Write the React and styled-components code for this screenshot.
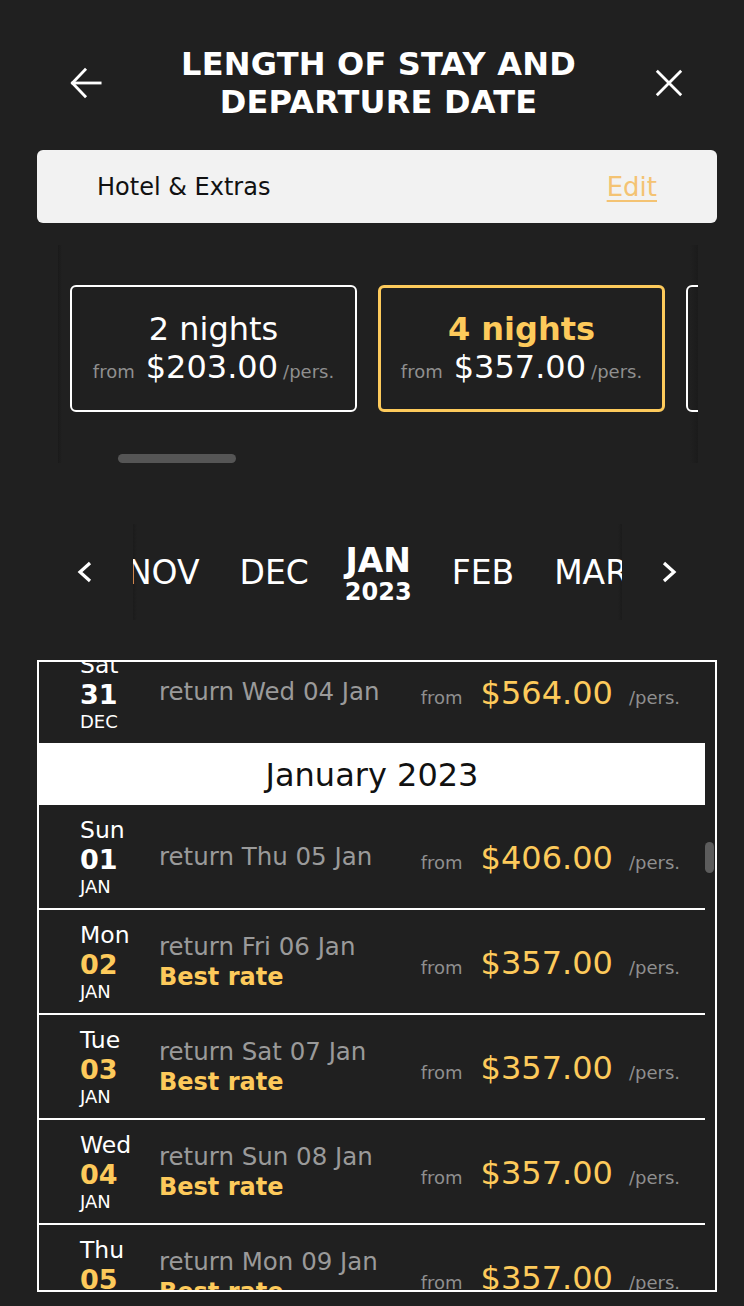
import React, { useEffect, useRef } from 'react';
import styled, { createGlobalStyle } from 'styled-components';

const GlobalStyle = createGlobalStyle`
    html, body {
        margin: 0;
        padding: 0;
        background: #202020;
        font-family: "DejaVu Sans", "Liberation Sans", sans-serif;
        color: #fff;
    }
    * { box-sizing: border-box; }
`;

const YELLOW = '#fdca5b';

const Page = styled.div`
    width: 744px;
    min-height: 1306px;
    padding-bottom: 14px;
    overflow: hidden;
`;

const Header = styled.header`
    display: grid;
    grid-template-columns: 32px 1fr 28px;
    align-items: center;
    padding: 45px 61px 0 70px;
`;

const Title = styled.h1`
    margin: 0;
    font-size: 32px;
    line-height: 38px;
    font-weight: 700;
    text-align: center;
    letter-spacing: 0.2px;
`;

const IconButton = styled.button`
    background: none;
    border: 0;
    padding: 0;
    display: flex;
    align-items: center;
    justify-content: center;
    color: #fff;
`;

const Summary = styled.div`
    margin: 29px 27px 0 37px;
    height: 73px;
    background: #f2f2f2;
    border-radius: 6px;
    display: flex;
    align-items: center;
    justify-content: space-between;
    padding: 0 60px;
    font-size: 24px;
    color: #111;
`;

const EditLink = styled.a`
    font-size: 26px;
    color: #f4c373;
    text-decoration: underline;
    text-underline-offset: 4px;
`;

const StayCarousel = styled.div`
    margin: 22px 0 0 58px;
    width: 640px;
    height: 218px;
    padding-top: 40px;
    overflow: hidden;
    background: linear-gradient(to right, #1a1a1a 0, #202020 4px, #202020 632px, #1b1b1b 640px);
`;

const CardRow = styled.div`
    display: flex;
    gap: 21px;
    padding-left: 12px;
`;

const StayCard = styled.div`
    flex: 0 0 287px;
    height: 127px;
    border-radius: 6px;
    border: ${p => (p.$active ? `3px solid ${YELLOW}` : '2px solid #fff')};
    display: flex;
    flex-direction: column;
    align-items: center;
    justify-content: center;
    padding-bottom: 2px;
`;

const Nights = styled.div`
    font-size: 32px;
    line-height: 38px;
    font-weight: ${p => (p.$active ? 700 : 400)};
    color: ${p => (p.$active ? YELLOW : '#fff')};
`;

const PriceLine = styled.div`
    display: flex;
    align-items: baseline;
`;

const Small = styled.span`
    font-size: 18px;
    color: #8f8f8f;
`;

const CardPrice = styled.span`
    font-size: 32px;
    color: #fff;
    margin: 0 5px 0 11px;
`;

const ThumbTrack = styled.div`
    margin: 42px 0 0 60px;
    width: 118px;
    height: 9px;
    border-radius: 5px;
    background: #555;
`;

const MonthNav = styled.nav`
    margin-top: 61px;
    display: flex;
    align-items: center;
    padding-left: 70px;
`;

const Chevron = styled.button`
    width: 30px;
    height: 40px;
    background: none;
    border: 0;
    padding: 0;
    display: flex;
    align-items: center;
    justify-content: center;
`;

const MonthStrip = styled.div`
    width: 489px;
    height: 96px;
    margin: 0 32px 0 33px;
    overflow: hidden;
    display: flex;
    align-items: center;
    justify-content: center;
    gap: 40px;
    background: linear-gradient(to right, #1b1b1b 0, #202020 4px, #202020 485px, #1b1b1b 489px);
`;

const Month = styled.div`
    flex: 0 0 auto;
    display: flex;
    flex-direction: column;
    align-items: center;
    font-size: 33px;
    line-height: 36px;
    font-weight: ${p => (p.$current ? 700 : 400)};
    padding-top: ${p => (p.$current ? '4px' : '2px')};
    margin-left: ${p => (p.$current ? '-4px' : '0')};
`;

const Year = styled.span`
    font-size: 24px;
    line-height: 26px;
    font-weight: 700;
`;

const ListBox = styled.div`
    position: relative;
    margin: 40px 27px 0 37px;
    height: 632px;
    border: 2px solid #fff;
`;

const ListScroll = styled.div`
    height: 100%;
    overflow: hidden;
    padding-right: 10px;
`;

const ScrollThumb = styled.div`
    position: absolute;
    top: 180px;
    right: 1px;
    width: 9px;
    height: 31px;
    border-radius: 5px;
    background: #5c5c5c;
`;

const MonthHeader = styled.div`
    height: 60px;
    background: #fff;
    color: #111;
    font-size: 32px;
    display: flex;
    align-items: center;
    justify-content: center;
`;

const DayRow = styled.div`
    height: 105px;
    border-bottom: 2px solid #fff;
    display: flex;
    align-items: center;
    padding: 0 25px 0 41px;
`;

const DayCol = styled.div`
    width: 79px;
    display: flex;
    flex-direction: column;
    padding-top: 1px;
`;

const WeekDay = styled.span`
    font-size: 23.5px;
    line-height: 28px;
`;

const DayNum = styled.span`
    font-size: 27px;
    line-height: 31px;
    font-weight: 700;
    color: ${p => (p.$best ? YELLOW : '#fff')};
`;

const MonthAbbr = styled.span`
    font-size: 18px;
    line-height: 24px;
`;

const ReturnCol = styled.div`
    flex: 1;
    display: flex;
    flex-direction: column;
    font-size: 24.5px;
    line-height: 30px;
    color: #9a9a9a;
`;

const BestRate = styled.span`
    color: ${YELLOW};
    font-weight: 700;
    font-size: 24px;
`;

const RowPrice = styled.div`
    display: flex;
    align-items: baseline;
    padding-top: 2px;
`;

const Price = styled.span`
    font-size: 32px;
    color: ${YELLOW};
    margin: 0 16px 0 18px;
`;

const days = [
    { wd: 'Sat', d: '31', m: 'DEC', ret: 'Wed 04 Jan', price: '$564.00' },
    { header: 'January 2023' },
    { wd: 'Sun', d: '01', m: 'JAN', ret: 'Thu 05 Jan', price: '$406.00' },
    { wd: 'Mon', d: '02', m: 'JAN', ret: 'Fri 06 Jan', price: '$357.00', best: true },
    { wd: 'Tue', d: '03', m: 'JAN', ret: 'Sat 07 Jan', price: '$357.00', best: true },
    { wd: 'Wed', d: '04', m: 'JAN', ret: 'Sun 08 Jan', price: '$357.00', best: true },
    { wd: 'Thu', d: '05', m: 'JAN', ret: 'Mon 09 Jan', price: '$357.00', best: true },
    { wd: 'Fri', d: '06', m: 'JAN', ret: 'Tue 10 Jan', price: '$357.00', best: true },
];

function ArrowLeft() {
    return (
        <svg width="34" height="34" viewBox="0 0 34 34" fill="none" stroke="#fff" strokeWidth="3" strokeLinecap="square">
            <path d="M3 17 H32" />
            <path d="M16 3 L2.5 17 L16 31" />
        </svg>
    );
}

function CloseIcon() {
    return (
        <svg width="30" height="30" viewBox="0 0 30 30" fill="none" stroke="#fff" strokeWidth="3" strokeLinecap="square">
            <path d="M3 3 L27 27 M27 3 L3 27" />
        </svg>
    );
}

function ChevronIcon({ dir }) {
    const d = dir === 'left' ? 'M13 2 L3 11 L13 20' : 'M3 2 L13 11 L3 20';
    return (
        <svg width="16" height="22" viewBox="0 0 16 22" fill="none" stroke="#fff" strokeWidth="3.2">
            <path d={d} />
        </svg>
    );
}

export default function App() {
    const listRef = useRef(null);

    useEffect(() => {
        if (listRef.current) listRef.current.scrollTop = 22;
    }, []);

    return (
        <Page>
            <GlobalStyle />
            <Header>
                <IconButton><ArrowLeft /></IconButton>
                <Title>LENGTH OF STAY AND<br />DEPARTURE DATE</Title>
                <IconButton><CloseIcon /></IconButton>
            </Header>

            <Summary>
                <span>Hotel &amp; Extras</span>
                <EditLink>Edit</EditLink>
            </Summary>

            <StayCarousel>
                <CardRow>
                    <StayCard>
                        <Nights>2 nights</Nights>
                        <PriceLine><Small>from</Small><CardPrice>$203.00</CardPrice><Small>/pers.</Small></PriceLine>
                    </StayCard>
                    <StayCard $active>
                        <Nights $active>4 nights</Nights>
                        <PriceLine><Small>from</Small><CardPrice>$357.00</CardPrice><Small>/pers.</Small></PriceLine>
                    </StayCard>
                    <StayCard>
                        <Nights>6 nights</Nights>
                        <PriceLine><Small>from</Small><CardPrice>$512.00</CardPrice><Small>/pers.</Small></PriceLine>
                    </StayCard>
                </CardRow>
                <ThumbTrack />
            </StayCarousel>

            <MonthNav>
                <Chevron><ChevronIcon dir="left" /></Chevron>
                <MonthStrip>
                    <Month>NOV</Month>
                    <Month>DEC</Month>
                    <Month $current>JAN<Year>2023</Year></Month>
                    <Month>FEB</Month>
                    <Month>MAR</Month>
                </MonthStrip>
                <Chevron><ChevronIcon dir="right" /></Chevron>
            </MonthNav>

            <ListBox>
                <ListScroll ref={listRef}>
                    {days.map((row, i) =>
                        row.header ? (
                            <MonthHeader key={i}>{row.header}</MonthHeader>
                        ) : (
                            <DayRow key={i}>
                                <DayCol>
                                    <WeekDay>{row.wd}</WeekDay>
                                    <DayNum $best={row.best}>{row.d}</DayNum>
                                    <MonthAbbr>{row.m}</MonthAbbr>
                                </DayCol>
                                <ReturnCol>
                                    <span>return {row.ret}</span>
                                    {row.best && <BestRate>Best rate</BestRate>}
                                </ReturnCol>
                                <RowPrice>
                                    <Small>from</Small>
                                    <Price>{row.price}</Price>
                                    <Small>/pers.</Small>
                                </RowPrice>
                            </DayRow>
                        )
                    )}
                </ListScroll>
                <ScrollThumb />
            </ListBox>
        </Page>
    );
}
